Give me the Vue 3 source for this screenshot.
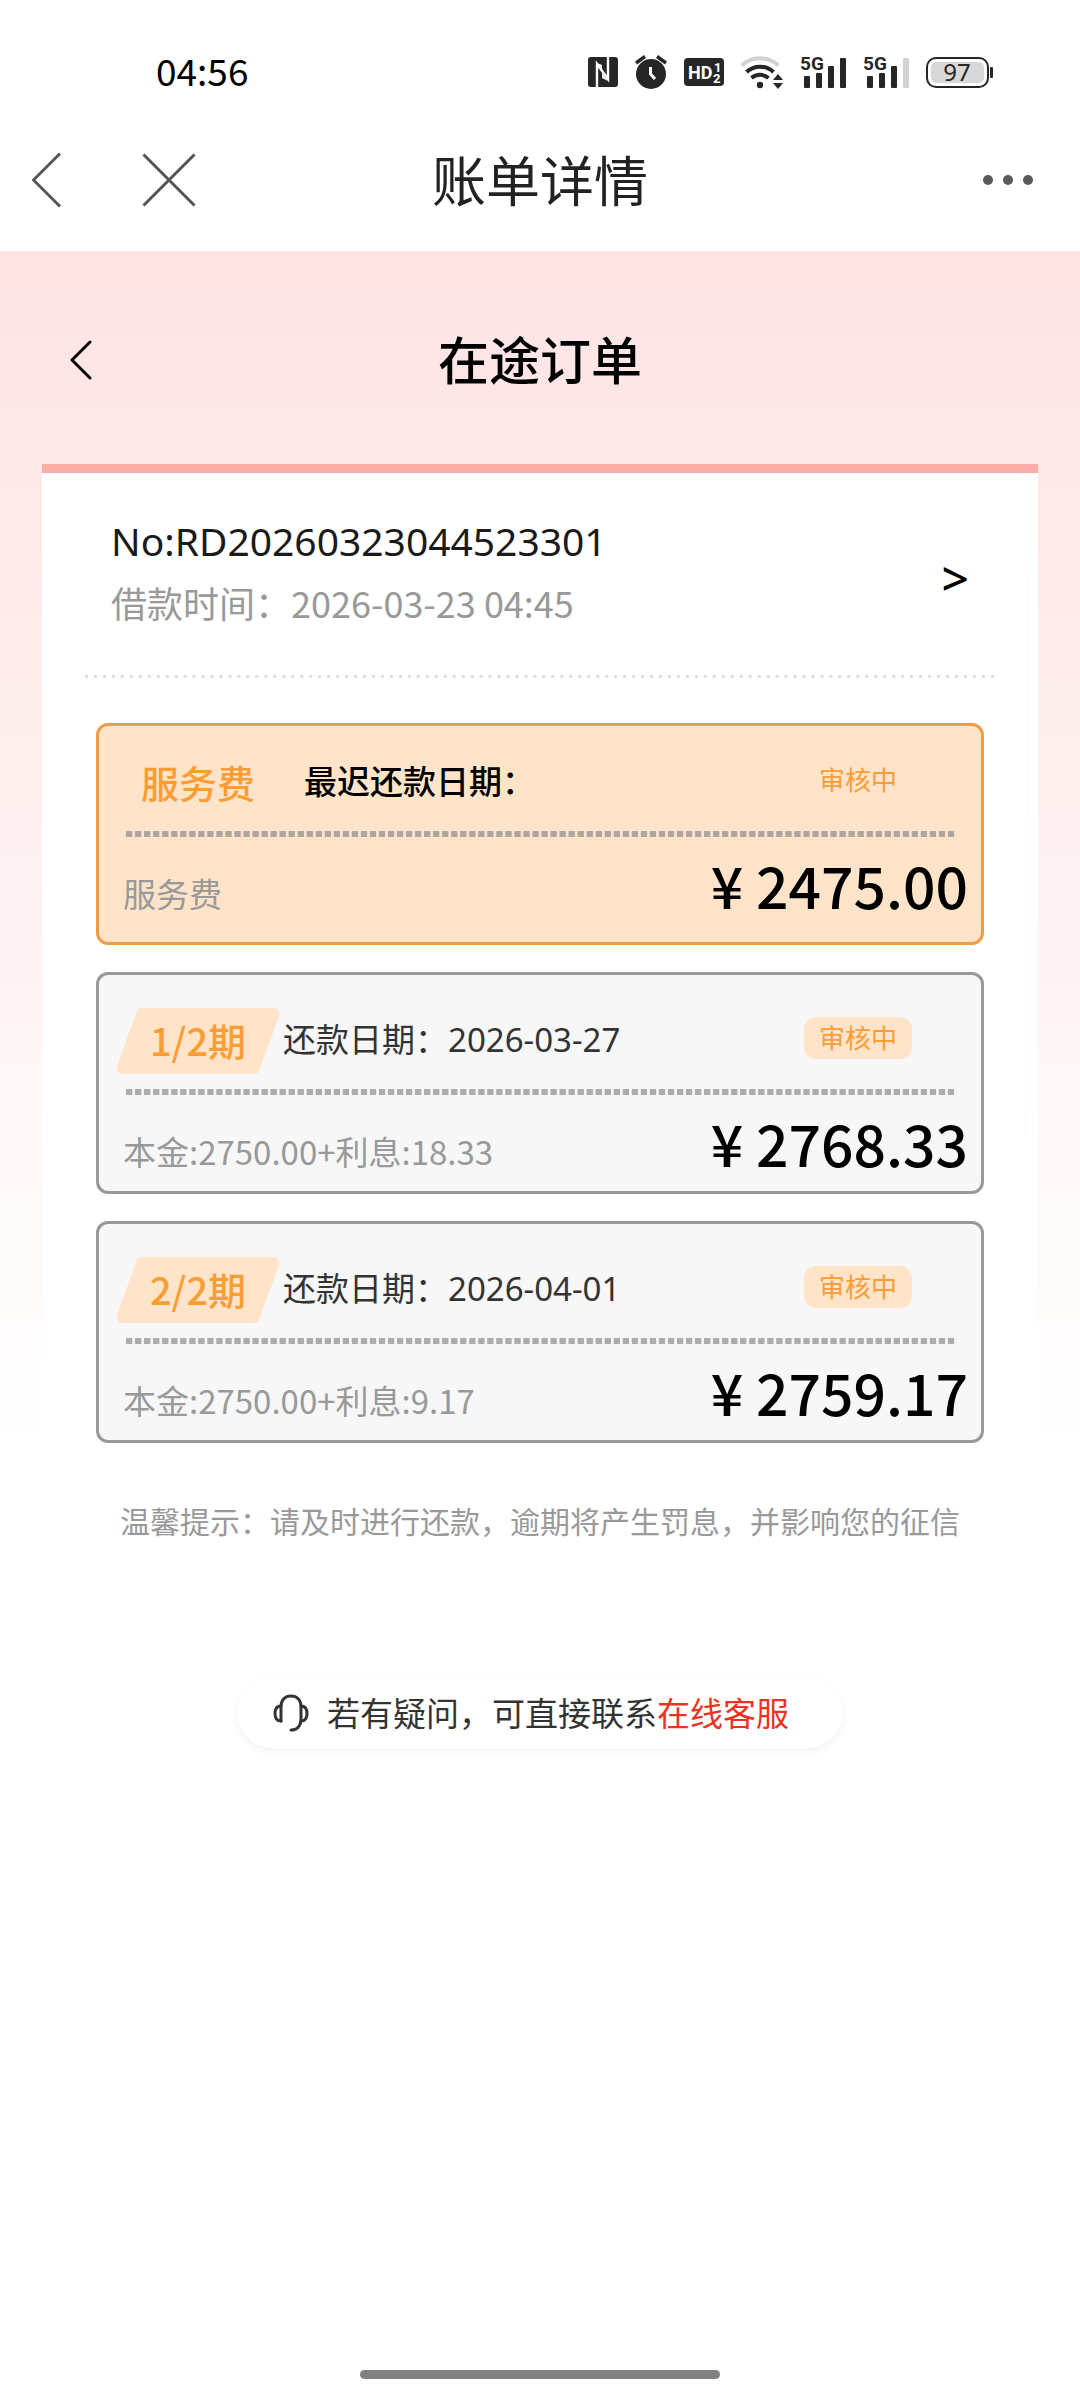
<script setup>
const order = {
  no: 'RD20260323044523301',
  time: '2026-03-23 04:45',
}

const bills = [
  { id: 0, fee: true, tag: '服务费', date: '最迟还款日期：', detail: '服务费', amount: '2475.00', status: '审核中' },
  { id: 1, fee: false, tag: '1/2期', date: '还款日期：2026-03-27', detail: '本金:2750.00+利息:18.33', amount: '2768.33', status: '审核中' },
  { id: 2, fee: false, tag: '2/2期', date: '还款日期：2026-04-01', detail: '本金:2750.00+利息:9.17', amount: '2759.17', status: '审核中' },
]
</script>

<template>
  <div class="page">
    <div class="status">
      <span class="clock">04:56</span>
      <div class="status-icons">
        <svg width="30" height="30" viewBox="0 0 30 30">
          <rect width="30" height="30" rx="3" fill="#262626" />
          <path d="M9 30V7L20 22V0" fill="none" stroke="#fff" stroke-width="2.4" />
          <path d="M9 6L14 8V13ZM20 24L14 21V16Z" fill="#fff" />
        </svg>
        <svg width="32" height="34" viewBox="0 0 32 34">
          <circle cx="16" cy="19" r="15" fill="#262626" />
          <path d="M1 8L10 1.5M31 8L22 1.5" stroke="#262626" stroke-width="3.4" />
          <path d="M15.500 12V19L20 24" fill="none" stroke="#fff" stroke-width="3" />
        </svg>
        <svg width="40" height="28" viewBox="0 0 40 28">
          <rect width="40" height="28" rx="4" fill="#262626" />
          <text x="4" y="21" font-size="18" font-weight="700" fill="#fff">HD</text>
          <text x="30" y="14" font-size="13" font-weight="700" fill="#fff">1</text>
          <text x="29" y="25" font-size="13" font-weight="700" fill="#fff">2</text>
        </svg>
        <svg width="42" height="34" viewBox="1 0 42 34">
          <g fill="none" stroke-width="4">
            <path d="M1.500 10.500A27 27 0 0 1 38.500 10.500" stroke="#d2d2d2" />
            <path d="M6.500 17A20 20 0 0 1 33.500 17" stroke="#262626" />
            <path d="M11.500 23A13 13 0 0 1 28.500 23" stroke="#262626" />
          </g>
          <circle cx="20" cy="30" r="3.200" fill="#262626" />
          <path d="M33 25L38 19L43 25ZM33 28L38 34L43 28Z" fill="#262626" />
        </svg>
        <svg width="46" height="45" viewBox="0 -6 46 45">
          <text x="0" y="14" font-size="19" font-weight="700" fill="#262626">5G</text>
          <g fill="#262626">
            <rect x="4" y="20" width="6" height="12" rx="1" />
            <rect x="16" y="17" width="6" height="15" rx="1" />
            <rect x="28" y="10" width="6" height="22" rx="1" />
            <rect x="40" y="2" width="6" height="30" rx="1" />
          </g>
        </svg>
        <svg width="46" height="45" viewBox="0 -6 46 45">
          <text x="0" y="14" font-size="19" font-weight="700" fill="#262626">5G</text>
          <g fill="#262626">
            <rect x="4" y="20" width="6" height="12" rx="1" />
            <rect x="16" y="17" width="6" height="15" rx="1" />
            <rect x="28" y="10" width="6" height="22" rx="1" />
            <rect x="40" y="2" width="6" height="30" rx="1" fill="#d2d2d2" />
          </g>
        </svg>
        <svg width="67" height="45" viewBox="0 -7 67 45">
          <rect x="1" y="1" width="61" height="29" rx="9" fill="#fff" stroke="#262626" stroke-width="2" />
          <rect x="5" y="5" width="53" height="21" rx="5" fill="#d8d8d8" />
          <rect x="64" y="10" width="3" height="11" rx="1" fill="#262626" />
          <text x="31" y="24" font-size="24" text-anchor="middle" fill="#262626" class="level">97</text>
        </svg>
      </div>
    </div>

    <header class="nav">
      <div class="nav-side">
        <button class="icon-btn" type="button" aria-label="返回">
          <svg width="30" height="56" viewBox="0 0 30 56">
            <path d="M28 1.500L1.500 28L28 54.500" fill="none" stroke="#555" stroke-width="3" />
          </svg>
        </button>
        <button class="icon-btn" type="button" aria-label="关闭">
          <svg width="54" height="54" viewBox="0 0 54 54">
            <path d="M1.500 1.500L52.500 52.500M52.500 1.500L1.500 52.500" fill="none" stroke="#555" stroke-width="3" />
          </svg>
        </button>
      </div>
      <h1 class="nav-title">账单详情</h1>
      <div class="nav-side nav-end">
        <button class="icon-btn" type="button" aria-label="更多">
          <svg width="50" height="10" viewBox="0 0 50 10" fill="#5a5a5a">
            <circle cx="5" cy="5" r="5" />
            <circle cx="25" cy="5" r="5" />
            <circle cx="45" cy="5" r="5" />
          </svg>
        </button>
      </div>
    </header>

    <main class="body">
      <div class="head">
        <div class="head-side">
          <button class="icon-btn" type="button" aria-label="返回上一页">
            <svg width="22" height="40" viewBox="0 0 22 40">
              <path d="M20 2L2 20L20 38" fill="none" stroke="#000" stroke-width="3" stroke-linecap="round" stroke-linejoin="round" />
            </svg>
          </button>
        </div>
        <h2 class="head-title">在途订单</h2>
        <div class="head-side"></div>
      </div>

      <section class="sheet">
        <div class="order">
          <div>
            <p class="order-no">No:{{ order.no }}</p>
            <p class="order-time">借款时间：{{ order.time }}</p>
          </div>
          <button class="arrow" type="button" aria-label="查看订单">&gt;</button>
        </div>
        <div class="dots"></div>

        <ul class="bills">
          <li v-for="bill in bills" :key="bill.id" class="bill" :class="{ fee: bill.fee }">
            <div class="bill-top">
              <span class="tag">{{ bill.tag }}</span>
              <span class="date">{{ bill.date }}</span>
              <span class="badge">{{ bill.status }}</span>
            </div>
            <div class="dashes"></div>
            <div class="bill-bottom">
              <span class="detail">{{ bill.detail }}</span>
              <strong class="amount">¥ {{ bill.amount }}</strong>
            </div>
          </li>
        </ul>

        <p class="tip">温馨提示：请及时进行还款，逾期将产生罚息，并影响您的征信</p>
      </section>

      <div class="support">
        <svg width="36" height="38" viewBox="0 0 36 38">
          <g fill="none" stroke="#333" stroke-width="3" stroke-linecap="round" stroke-linejoin="round">
            <path d="M8 27V13C8 6 12 2 18 2S28 6 28 13V25C28 32 24 36 18 36" />
            <path d="M8 12C4 12 2 15 2 19.500S4 27 8 27" />
            <path d="M28 12C32 12 34 15 34 19.500S32 27 28 27" />
          </g>
        </svg>
        <p class="support-text">若有疑问，可直接联系<a href="#service">在线客服</a></p>
      </div>
    </main>

    <div class="home-bar"></div>
  </div>
</template>

<style>
body {
  margin: 0;
  background: #fff;
}
</style>

<style scoped>
.page {
  display: flex;
  flex-direction: column;
  min-height: 100vh;
  background: #fff;
  color: #000;
  font-family: "Noto Sans", "Noto Sans CJK SC", sans-serif;
}
h1, h2, p, ul {
  margin: 0;
  padding: 0;
  font-weight: 400;
}
svg {
  display: block;
}
.icon-btn {
  display: block;
  padding: 0;
  border: 0;
  background: none;
}

.status {
  display: flex;
  align-items: center;
  justify-content: space-between;
  height: 72px;
  padding: 36px 87px 0 156px;
}
.clock {
  padding-bottom: 4px;
  font-family: "Noto Sans CJK SC", sans-serif;
  font-size: 37px;
  line-height: 48px;
}
.status-icons {
  display: flex;
  align-items: center;
  gap: 17px;
  font-family: Roboto, sans-serif;
}
.level {
  font-family: "Noto Sans", sans-serif;
}

.nav {
  display: grid;
  grid-template-columns: 1fr auto 1fr;
  align-items: center;
  height: 143px;
}
.nav-side {
  display: flex;
  gap: 80px;
  align-items: center;
  padding-left: 32px;
}
.nav-end {
  justify-content: flex-end;
  padding-right: 47px;
}
.nav-title {
  padding-top: 2px;
  font-size: 54px;
  line-height: 72px;
  color: #222;
}

.body {
  flex: 1;
  background: linear-gradient(180deg, #ffe3e3 0, #fff 1200px);
}
.head {
  display: flex;
  align-items: center;
  height: 209px;
  padding: 4px 70px 0;
}
.head-side {
  flex: 1;
}
.head-title {
  font-size: 51px;
  line-height: 72px;
  font-weight: 500;
}

.sheet {
  margin: 0 42px;
  border-top: 9px solid #f9ada6;
  background: #fff;
}
.order {
  display: flex;
  align-items: center;
  justify-content: space-between;
  padding: 38px 69px 42px;
}
.order-no {
  font-size: 39px;
  line-height: 60px;
  color: #1a1a1a;
}
.order-time {
  font-family: "Noto Sans CJK SC", sans-serif;
  font-size: 36px;
  line-height: 62px;
  color: #999;
}
.arrow {
  padding: 12px 0 0;
  border: 0;
  background: none;
  color: #000;
  font: inherit;
  font-size: 48px;
  font-weight: 500;
  line-height: 62px;
}
.dots {
  height: 3px;
  margin: 0 40px;
  background: radial-gradient(circle, #d9d9d9 1px, transparent 2px) 0 0 / 9px 3px round;
}

.bills {
  display: flex;
  flex-direction: column;
  gap: 27px;
  padding: 45px 54px 0;
  list-style: none;
}
.bill {
  padding-top: 33px;
  border: 3px solid #999;
  border-radius: 12px;
  background: #f7f7f7;
}
.bill-top {
  display: flex;
  align-items: center;
  gap: 15px;
  height: 66px;
  padding: 0 69px 0 29px;
}
.tag {
  position: relative;
  z-index: 0;
  width: 140px;
  height: 66px;
  font-family: "Noto Sans CJK SC", sans-serif;
  font-size: 38px;
  line-height: 64px;
  font-weight: 500;
  text-align: center;
  color: #f99d34;
}
.tag::before {
  content: "";
  position: absolute;
  inset: 0 -2px;
  z-index: -1;
  border-radius: 3px 9px;
  background: #ffe4ca;
  transform: skewX(-20deg);
}
.date {
  flex: 1;
  padding-bottom: 2px;
  font-size: 33px;
  line-height: 48px;
  color: #333;
}
.badge {
  margin-bottom: 6px;
  padding: 0 15px;
  border-radius: 12px;
  background: #ffe4ca;
  font-size: 26px;
  line-height: 42px;
  color: #f99d34;
}
.dashes {
  height: 6px;
  margin: 15px 24px 0 27px;
  background: linear-gradient(90deg, rgba(140, 140, 140, 0.7) 66%, transparent 67%) 0 0 / 9px 6px round;
}
.bill-bottom {
  display: flex;
  align-items: center;
  justify-content: space-between;
  height: 96px;
  padding: 0 13px 0 24px;
  font-family: "Noto Sans CJK SC", sans-serif;
}
.detail {
  padding-top: 16px;
  font-size: 33px;
  line-height: 48px;
  color: #999;
}
.amount {
  padding-bottom: 2px;
  font-size: 57px;
  line-height: 72px;
  font-weight: 500;
}
.fee {
  padding: 24px 0 9px;
  border-color: #f09c45;
  background: #ffe4ca;
}
.fee .bill-top {
  gap: 36px;
}
.fee .date {
  color: #000;
  font-weight: 500;
}

.tip {
  padding: 49px 0 0;
  font-size: 30px;
  line-height: 60px;
  text-align: center;
  color: #999;
}

.support {
  display: flex;
  align-items: center;
  gap: 18px;
  width: fit-content;
  height: 70px;
  margin: 126px auto 0;
  padding: 0 54px 0 36px;
  border-radius: 35px;
  background: #fff;
  box-shadow: 0 3px 9px rgba(0, 0, 0, 0.06);
}
.support-text {
  padding-top: 2px;
  font-size: 33px;
  line-height: 48px;
  color: #333;
}
.support-text a {
  color: #ea3323;
  text-decoration: none;
}

.home-bar {
  width: 360px;
  height: 9px;
  margin: 0 auto 21px;
  border-radius: 5px;
  background: #808080;
}
</style>
